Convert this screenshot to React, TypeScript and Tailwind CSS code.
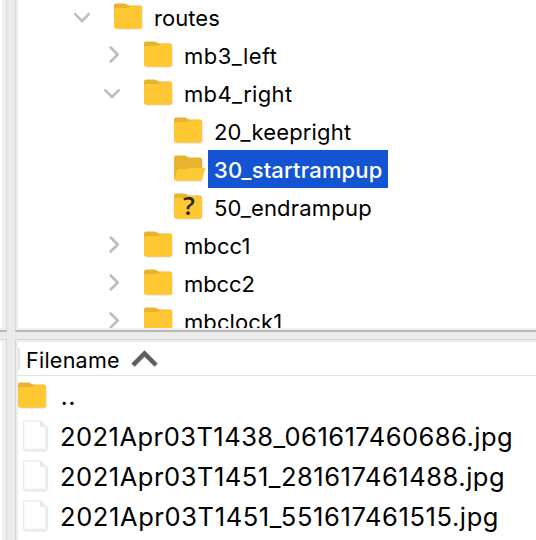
import React from "react";

type FolderKind = "closed" | "open" | "unknown";

function Folder({ kind = "closed" }: { kind?: FolderKind }) {
  return (
    <svg className="h-8 w-8 shrink-0 overflow-visible" viewBox="0 0 32 32">
      <path d="M2 4H11L14 5.5H27L29.3 7V26L27 28H4L1 26Z" fill="#f0eee8" />
      <path d="M0 3.5Q0 1.5 2 1.5H10Q12 1.5 13 2.5L15 3.5H26Q28 3.5 28 5.5V24Q28 26.5 25.5 26.5H2.5Q0 26.5 0 24Z" fill="#e8b42f" />
      {kind === "open" ? (
        <path d="M5 15H13L17 14H31.5L28 25Q27.5 26.5 25.5 26.5H2.5Q0 26.5 0.5 24L3 16.5Q3.5 15 5 15Z" fill="#ffc933" />
      ) : (
        <path d="M0 7.5Q0 6 2 6H12Q14 6 15.5 5Q16.5 4.2 18 4.2H26.5Q28 4.2 28 6V24Q28 26.5 25.5 26.5H2.5Q0 26.5 0 24Z" fill="#ffc832" />
      )}
      {kind === "unknown" && (
        <text x="15" y="22.5" textAnchor="middle" fontSize="26" fontWeight="600" fontFamily="'Open Sans', 'Noto Sans', sans-serif" fill="#2b2412">?</text>
      )}
    </svg>
  );
}

function FileIcon() {
  return (
    <svg className="ml-1 h-8 w-7 shrink-0" viewBox="0 0 28 32">
      <path d="M3 2H20L26 8V29L23 31.5H4L1 29Z" fill="#e8e8e8" />
      <path d="M1.5 2.5Q1.5 1 3 1H18.5L24 6.5V28Q24 29.5 22.5 29.5H3Q1.5 29.5 1.5 28Z" fill="#fff" stroke="#ececec" strokeWidth="1.5" />
      <path d="M18 1L24 7H19.5Q18 7 18 5.5Z" fill="#e9e9e9" />
    </svg>
  );
}

function Chevron({ open }: { open: boolean }) {
  return (
    <svg className="h-5 w-5 shrink-0" viewBox="0 0 20 20" fill="none" stroke="#bdbdbd" strokeWidth="2.6" strokeLinecap="round" strokeLinejoin="round">
      {open ? <path d="M3.2 7.2L10 14L16.8 7.2" /> : <path d="M8.7 2.5L15.7 9.5L8.7 16.5" />}
    </svg>
  );
}

interface Node {
  name: string;
  indent: string;
  kind?: FolderKind;
  open?: boolean;
  selected?: boolean;
  tracking: string;
}

const nodes: Node[] = [
  { name: "routes", indent: "pl-[54px]", open: true, tracking: "tracking-[0.05px]" },
  { name: "mb3_left", indent: "pl-[84px]", open: false, tracking: "tracking-[0.45px]" },
  { name: "mb4_right", indent: "pl-[84px]", open: true, tracking: "tracking-[0.35px]" },
  { name: "20_keepright", indent: "pl-[114px]", tracking: "tracking-[0.15px]" },
  { name: "30_startrampup", indent: "pl-[114px]", kind: "open", selected: true, tracking: "tracking-[0.15px]" },
  { name: "50_endrampup", indent: "pl-[114px]", kind: "unknown", tracking: "tracking-[0.2px]" },
  { name: "mbcc1", indent: "pl-[84px]", open: false, tracking: "tracking-[0.1px]" },
  { name: "mbcc2", indent: "pl-[84px]", open: false, tracking: "tracking-[-0.1px]" },
  { name: "mbclock1", indent: "pl-[84px]", open: false, tracking: "tracking-[0.1px]" },
];

const files = [
  { name: "2021Apr03T1438_061617460686.jpg", tracking: "tracking-[0.47px]" },
  { name: "2021Apr03T1451_281617461488.jpg", tracking: "tracking-[0.53px]" },
  { name: "2021Apr03T1451_551617461515.jpg", tracking: "tracking-[0.6px]" },
];

export default function App() {
  return (
    <div className="flex h-[540px] w-[536px] overflow-hidden bg-[#ebebeb] font-['Inter',sans-serif] text-black">
      <div className="flex w-[7px] shrink-0 flex-col">
        <div className="h-[332px] border-r border-b-2 border-r-[#d5d5d5] border-b-[#b8b8b8] bg-[#f0f0f0]">
          <div className="h-[328px] w-0.5 bg-white" />
        </div>
        <div className="mt-[7px] h-[201px] border-t border-r border-[#d5d5d5] bg-[#f0f0f0] pt-0.5">
          <div className="h-full w-0.5 bg-white" />
        </div>
      </div>
      <div className="ml-2 flex w-[521px] flex-col">
        <div className="h-[332px] border-b-2 border-l border-b-[#b8b8b8] border-l-[#d8d8d8] bg-[#ededed] pl-0.5">
          <div className="h-[328px] overflow-hidden bg-white">
            <div className="-mt-0.5">
              {nodes.map((n) => (
                <div key={n.name} className={`flex h-[38px] items-center ${n.indent}`}>
                  <div className="flex w-[42px] shrink-0">{n.open !== undefined && <Chevron open={n.open} />}</div>
                  <div className="mr-0.5 flex w-8 shrink-0 pt-0.5">
                    <Folder kind={n.kind} />
                  </div>
                  <span className={`flex h-[38px] items-center whitespace-nowrap pt-px pl-1.5 text-[22px] leading-none ${n.tracking} ${n.selected ? "w-[180px] bg-[#1254d1] font-medium text-white" : ""}`}>
                    {n.name}
                  </span>
                </div>
              ))}
            </div>
          </div>
        </div>
        <div className="mt-[7px] h-[201px] border-t border-l border-[#d5d5d5] bg-[#ededed] pt-0.5 pl-0.5">
          <div className="h-full overflow-hidden bg-white">
            <div className="flex h-[34px] items-center border-b border-[#e2e2e2]">
              <div className="h-[22px] w-0.5 bg-[#e5e5e5]" />
              <span className="ml-1.5 w-[105px] pt-1 text-[21.5px] leading-none tracking-[0.25px]">Filename</span>
              <svg className="h-5 w-7" viewBox="0 0 28 20" fill="none" strokeWidth="4.5">
                <path d="M2.5 17L14 5.5L25.5 17" stroke="#dddddd" />
                <path d="M2 16L13.5 4.5L25 16" stroke="#5e5e5e" />
              </svg>
            </div>
            <div className="flex h-10 items-center">
              <div className="pt-0.5"><Folder /></div>
              <span className="ml-[10.5px] text-[25.5px] leading-none tracking-[0.4px]">..</span>
            </div>
            {files.map((f) => (
              <div key={f.name} className="flex h-10 items-center">
                <FileIcon />
                <span className={`ml-2.5 whitespace-nowrap pt-0.5 text-[25.5px] leading-none ${f.tracking}`}>{f.name}</span>
              </div>
            ))}
          </div>
        </div>
      </div>
    </div>
  );
}
